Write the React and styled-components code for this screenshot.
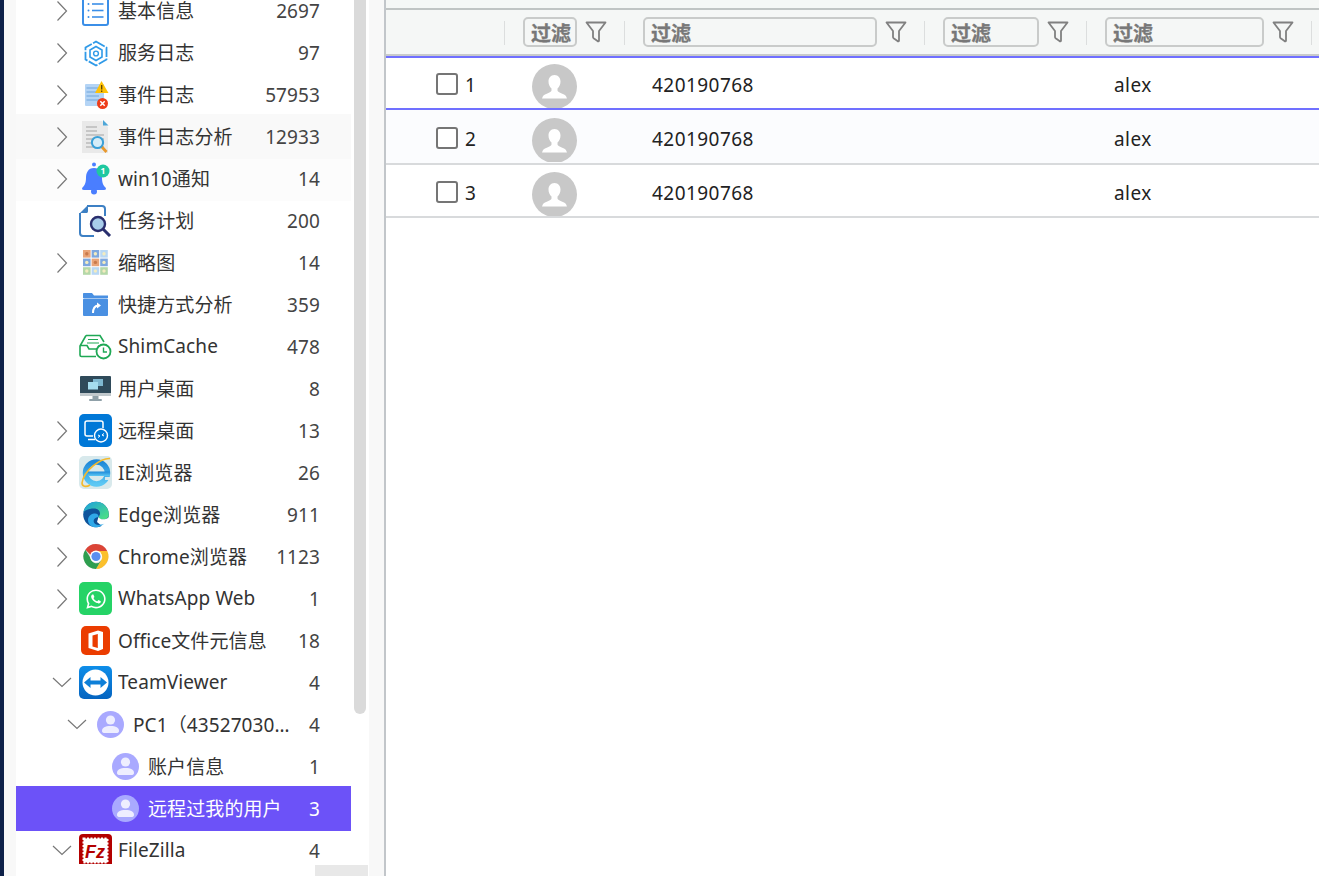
import React from 'react';
import styled, { createGlobalStyle } from 'styled-components';
import { FaWhatsapp } from 'react-icons/fa';

const GlobalStyle = createGlobalStyle`
    html, body {
        margin: 0;
        height: 100%;
        overflow: hidden;
        background: #fff;
        font-family: "Noto Sans", "Noto Sans CJK SC", sans-serif;
    }
    * { box-sizing: border-box; }
`;

const Page = styled.div`
    display: flex;
    height: 876px;
    overflow: hidden;
`;

const NavEdge = styled.div`
    flex: 0 0 4px;
    background: #0e2149;
`;

const Gutter = styled.div`
    flex: 0 0 ${p => p.$width}px;
    background: #f8f8f8;
`;

const TreePane = styled.aside`
    flex: 0 0 353px;
    display: flex;
    flex-direction: column;
    background: #fff;
`;

const TreeBody = styled.div`
    flex: 0 0 864px;
    display: flex;
    overflow: hidden;
`;

const TreeList = styled.div`
    flex: 0 0 338px;
    display: flex;
    flex-direction: column;
    margin-top: -12px;
`;

const TreeRow = styled.div`
    flex: 0 0 45px;
    width: 335px;
    margin-bottom: -3px;
    display: flex;
    align-items: center;
    padding: 0 31px 0 ${p => 31 + p.$level * 15}px;
    color: ${p => (p.$tone === 'selected' ? '#fff' : '#333')};
    background: ${p => ({ selected: '#6c52f8', hover: '#f9f9f9', soft: '#fcfcfc' }[p.$tone] || 'transparent')};
    z-index: ${p => (p.$tone === 'hover' || p.$tone === 'selected' ? 1 : 0)};
    font-size: 19px;
    letter-spacing: 0.1px;
`;

const Arrow = styled.span`
    flex: 0 0 30px;
    margin-right: 2px;
    display: flex;
    justify-content: center;
`;

const IconBox = styled.span`
    flex: 0 0 33px;
    height: 33px;
    svg { display: block; }
`;

const Label = styled.span`
    flex: 1;
    min-width: 0;
    margin-left: 6px;
    padding-bottom: 2px;
    white-space: nowrap;
    overflow: hidden;
    text-overflow: ellipsis;
`;

const Count = styled.span`
    margin-left: 16px;
    flex: none;
    color: ${p => (p.$selected ? '#fff' : '#444')};
`;

const ScrollTrack = styled.div`
    flex: 0 0 15px;
`;

const ScrollThumb = styled.div`
    width: 12px;
    height: 714px;
    background: #dadada;
    border-radius: 0 0 6px 6px;
`;

const HScrollTrack = styled.div`
    flex: 1;
    padding: 1px 0 0 299px;
`;

const HScrollThumb = styled.div`
    width: 53px;
    height: 11px;
    background: #e8e8e8;
`;

const Main = styled.main`
    flex: 1;
    min-width: 0;
    border-left: 2px solid #c2c6ca;
    background: #fff;
`;

const TopStrip = styled.div`
    height: 8px;
    background: #f5f7f6;
`;

const columns = '119px 120px 300px 162px 225px 1fr';

const HeaderRow = styled.div`
    display: grid;
    grid-template-columns: ${columns};
    height: 48px;
    border-top: 2px solid #c0c4c4;
    border-bottom: 2px solid #c8cacb;
    background: #f5f7f6;
`;

const HeaderCell = styled.div`
    display: flex;
    align-items: center;
    padding-left: 18px;
`;

const FilterInput = styled.input`
    width: ${p => p.$width}px;
    height: 30px;
    padding: 2px 0 0 6px;
    border: 2px solid #c9cbca;
    border-radius: 5px;
    background: #f5f7f6;
    outline: none;
    font-family: inherit;
    font-size: 20px;
    font-weight: 700;
    &::placeholder {
        color: #787878;
        opacity: 1;
        -webkit-text-stroke: 0.3px #787878;
    }
`;

const FilterButton = styled.span`
    flex: 0 0 22px;
    margin-left: 8px;
    svg { display: block; }
`;

const Separator = styled.span`
    width: 1px;
    height: 24px;
    margin: 2px 0 0 auto;
    background: #dcdede;
`;

const shadows = {
    active: 'inset 0 2px 0 #7070ff, inset 0 -2px 0 #7070ff',
    stripe: 'inset 0 -1px 0 #d8dadc, 0 1px 0 #d8dadc',
    plain: 'inset 0 -2px 0 #d8dadc',
};

const DataRow = styled.div`
    display: grid;
    grid-template-columns: ${columns};
    height: 54px;
    padding-top: 2px;
    background: ${p => (p.$kind === 'stripe' ? '#fbfcfe' : 'transparent')};
    box-shadow: ${p => shadows[p.$kind]};
    color: #222;
    font-size: 19px;
    letter-spacing: 0.45px;
`;

const CheckCell = styled.div`
    display: flex;
    align-items: center;
    gap: 7px;
    padding-left: 50px;
`;

const RowNumber = styled.span`
    padding-top: 2px;
`;

const Checkbox = styled.span`
    width: 22px;
    height: 22px;
    border: 2px solid #757575;
    border-radius: 3px;
    background: #fff;
`;

const AvatarCell = styled.div`
    padding: 6px 0 0 27px;
`;

const Avatar = styled.div`
    width: 45px;
    height: 44px;
    overflow: hidden;
    svg { display: block; }
`;

const TextCell = styled.div`
    display: flex;
    align-items: center;
    padding: 2px 0 0 27px;
`;

const Svg = ({ children }) => (
    <svg width="33" height="33" viewBox="0 0 33 33" fill="none">{children}</svg>
);

const ChevronRight = () => (
    <svg width="12" height="22" viewBox="0 0 12 22" fill="none">
        <path d="M1.5 1.5L10.5 11L1.5 20.5" stroke="#777" strokeWidth="1.2" />
    </svg>
);

const ChevronDown = () => (
    <svg width="20" height="11" viewBox="0 0 20 11" fill="none">
        <path d="M1 1L10 9.5L19 1" stroke="#777" strokeWidth="1.2" />
    </svg>
);

const FilterIcon = () => (
    <svg width="22" height="22" viewBox="0 0 22 22" fill="none">
        <path d="M1.5 1.5H20.5L14 10V19.5C14 20.5 13 20.5 12.5 20L9 17.5C8.5 17 8 17 8 16V10Z" stroke="#808080" strokeWidth="1.8" strokeLinejoin="round" />
    </svg>
);

const PersonAvatar = () => (
    <svg width="45" height="45" viewBox="0 0 45 45">
        <circle cx="22.5" cy="22.5" r="22.5" fill="#c8c8c8" />
        <path d="M22.5 11C18.6 11 16.5 14 16.5 17.5C16.5 20.5 17.8 23 19.5 24.5V26.5C19.5 28 16 29 13 30.5C11 31.5 10.5 33 10 34.5H35C34.5 33 34 31.5 32 30.5C29 29 25.5 28 25.5 26.5V24.5C27.2 23 28.5 20.5 28.5 17.5C28.5 14 26.4 11 22.5 11Z" fill="#fff" />
    </svg>
);

const BasicInfoIcon = () => (
    <Svg>
        <rect x="4" y="1" width="25" height="30" rx="2" stroke="#3b8fe8" strokeWidth="2" />
        {[10, 16.5, 23].map(y => (
            <g key={y}>
                <circle cx="9.5" cy={y} r="1" fill="#3b8fe8" />
                <path d={`M13 ${y}H24.5`} stroke="#3b8fe8" strokeWidth="1.6" />
            </g>
        ))}
    </Svg>
);

const ServiceIcon = () => (
    <Svg>
        <path d="M17 5.5L27.5 11.5V23.5L17 29.5L6.5 23.5V11.5Z" stroke="#2f9ae8" strokeWidth="1.8" strokeDasharray="10 1.5" />
        <path d="M17 10.5L23 14V21L17 24.5L11 21V14Z" stroke="#2f9ae8" strokeWidth="1.6" />
        <circle cx="17" cy="17.5" r="2.4" stroke="#2f9ae8" strokeWidth="1.4" />
    </Svg>
);

const EventLogIcon = () => (
    <Svg>
        <rect x="6" y="6" width="19" height="22" rx="1" fill="#b4d4f5" />
        {[10, 14, 18, 22].map(y => (
            <path key={y} d={`M7.5 ${y}H20`} stroke="#6fa5dc" strokeWidth="1" />
        ))}
        <path d="M22.5 3L29.5 15H16Z" fill="#ffc107" />
        <path d="M22.7 7V11.5M22.7 12.6V14" stroke="#5b4300" strokeWidth="1.3" />
        <circle cx="23.5" cy="25.5" r="5.5" fill="#ee3d1a" />
        <path d="M21.3 23.3L25.7 27.7M25.7 23.3L21.3 27.7" stroke="#fff" strokeWidth="1.5" />
    </Svg>
);

const AnalysisIcon = () => (
    <Svg>
        <path d="M3 1H23L29 7V33H3Z" fill="#e9e9e9" />
        <path d="M24 0L29.5 5.5H24Z" fill="#4ca6d8" />
        {[7, 11, 15, 19, 23, 27].map((y, i) => (
            <path key={y} d={`M7 ${y}H${i < 2 ? 18 : 25}`} stroke="#a9a9a9" strokeWidth="1.1" />
        ))}
        <path d="M22.5 26.5L27.5 32" stroke="#e8982c" strokeWidth="2.8" />
        <circle cx="18.5" cy="22.5" r="5.6" fill="#d6edf8" stroke="#3aa0d8" strokeWidth="2" />
    </Svg>
);

const BellIcon = () => (
    <Svg>
        <circle cx="15" cy="2.5" r="2" fill="#4a7eff" />
        <path d="M15 6C9 6 7 11 7 16C7 21 5.5 23.5 3.5 25.5C2.5 26.8 3 28 5 28H25C27 28 27.5 26.8 26.5 25.5C24.5 23.5 23 21 23 16C23 11 21 6 15 6Z" fill="#4a7eff" />
        <circle cx="15" cy="29.5" r="3" fill="#4a7eff" />
        <circle cx="24" cy="9" r="6.5" fill="#1fc8a0" />
        <text x="24" y="12" textAnchor="middle" fontSize="8.5" fontWeight="700" fill="#fff" fontFamily="Noto Sans">1</text>
    </Svg>
);

const TaskIcon = () => (
    <Svg>
        <path d="M8 2H23C25 2 26 3 26 5V12M15 32H4C2 32 1 31 1 29V9" stroke="#3d80c4" strokeWidth="2" />
        <path d="M9 1L1 9H7C8.5 9 9 8.5 9 7Z" fill="#3d80c4" />
        <path d="M24 25L31 32" stroke="#2a2f6e" strokeWidth="3" />
        <circle cx="19" cy="20" r="7" fill="#a8cdea" stroke="#2a2f6e" strokeWidth="2.4" />
    </Svg>
);

const thumbColors = [
    '#e8a57a', '#7fa8de', '#b8d8f4',
    '#7fa8de', '#e8a57a', '#7fa8de',
    '#b5d8a8', '#b8d8f4', '#b5d8a8',
];

const ThumbIcon = () => (
    <Svg>
        {thumbColors.map((c, i) => (
            <g key={i}>
                <rect x={4 + (i % 3) * 8.6} y={4 + Math.floor(i / 3) * 8.6} width="7.6" height="7.6" fill={c} />
                <circle cx={7.8 + (i % 3) * 8.6} cy={7.8 + Math.floor(i / 3) * 8.6} r="1.7" fill={i === 0 || i === 4 ? '#c97a4c' : '#f3ecc0'} />
            </g>
        ))}
    </Svg>
);

const ShortcutIcon = () => (
    <Svg>
        <path d="M4 6C4 5.4 4.4 5 5 5H13L15 7.5H29V10H4Z" fill="#4a90e2" />
        <rect x="4" y="10.5" width="25" height="17.5" rx="1" fill="#4a90e2" />
        <path d="M14 25C14 20 15.5 18 19 17.5" stroke="#fff" strokeWidth="2" />
        <path d="M18 14.5L22 17.5L18 20.5Z" fill="#fff" />
    </Svg>
);

const ShimIcon = () => (
    <Svg>
        <path d="M7 5.5H21L25 12M7 5.5L1 16V25C1 26 1.5 26.5 2.5 26.5H17" stroke="#1fa855" strokeWidth="1.6" />
        <path d="M1 15.5H8L10 19H18L20 15.5" stroke="#1fa855" strokeWidth="1.6" />
        <path d="M9 9.5H19M8 13H20" stroke="#1fa855" strokeWidth="1.2" />
        <circle cx="24.5" cy="21.5" r="7" fill="#fff" stroke="#1fa855" strokeWidth="1.8" />
        <path d="M24.5 17.5V22H28" stroke="#1fa855" strokeWidth="1.4" />
    </Svg>
);

const DesktopIcon = () => (
    <Svg>
        <rect x="1" y="4" width="31" height="20" rx="1" fill="#2f4a5a" />
        <rect x="1" y="21" width="31" height="3" fill="#c0c8cc" />
        <rect x="13.5" y="24" width="6" height="3" fill="#8fa0a8" />
        <rect x="10" y="27" width="13" height="2" rx="1" fill="#8fa0a8" />
        <rect x="14" y="7" width="10" height="7" fill="#7fb8d0" />
        <rect x="9" y="10" width="10" height="7.5" fill="#a5dcee" />
    </Svg>
);

const RdpIcon = () => (
    <Svg>
        <rect width="33" height="33" rx="5" fill="#0078d7" />
        <path d="M14 22H8C7 22 6 21 6 20V9C6 8 7 7 8 7H22C23 7 24 8 24 9V14M9 25.5H16" stroke="#fff" strokeWidth="1.5" />
        <circle cx="22" cy="21.5" r="6.5" fill="#0078d7" stroke="#fff" strokeWidth="1.4" />
        <path d="M19 23.5L21 22L19 21M25 19.5L23 21L25 22" stroke="#fff" strokeWidth="1" />
    </Svg>
);

const IeIcon = () => (
    <Svg>
        <defs>
            <linearGradient id="ieBlue" x1="0" y1="0" x2="0" y2="1">
                <stop offset="0" stopColor="#1e88d8" />
                <stop offset="1" stopColor="#5cc8f4" />
            </linearGradient>
        </defs>
        <rect width="33" height="33" rx="5" fill="#d8e9ec" />
        <circle cx="17.5" cy="17" r="11" stroke="url(#ieBlue)" strokeWidth="5.5" />
        <path d="M9 15.5H31V20H9Z" fill="url(#ieBlue)" />
        <path d="M26 21H32V24H26Z" fill="#d8e9ec" />
        <path d="M31 2.5C22 2 5 14 3 27C3 30.5 7 31.5 11 29" stroke="#f4b92c" strokeWidth="1.6" />
    </Svg>
);

const EdgeIcon = () => (
    <Svg>
        <defs>
            <linearGradient id="edgeBlue" x1="0" y1="0" x2="1" y2="1">
                <stop offset="0" stopColor="#0c59a4" />
                <stop offset="1" stopColor="#114a8b" />
            </linearGradient>
            <linearGradient id="edgeGreen" x1="0" y1="0" x2="1" y2="1">
                <stop offset="0" stopColor="#1b9de2" />
                <stop offset="1" stopColor="#50e67c" />
            </linearGradient>
        </defs>
        <circle cx="17" cy="16.5" r="12.8" fill="url(#edgeBlue)" />
        <path d="M4.5 14C6 7.5 11 3.7 17 3.7C24 3.7 29.8 9 29.8 16.5C29.8 20 27 21.5 24 21.5C21 21.5 19.5 20.5 19.5 19C19.5 18 21 17.5 21 15.5C21 12.5 18.5 10.5 15 10.5C10 10.5 7 12 4.5 14Z" fill="url(#edgeGreen)" />
        <path d="M19.5 19C21 21.8 25.5 22.3 30 19.5C29.5 24 27 27 24 29L18 24Z" fill="#fff" />
        <path d="M19.5 19C15.5 19.5 14 22 15 24.5C16 27 20 28 25.5 25.5C22 28.5 19 29.3 17 29.3C12 29.3 9 26 9 22C9 19 11.5 16 15 15.5C18 15 20 17 19.5 19Z" fill="#2fa8e8" />
    </Svg>
);

const ChromeIcon = () => (
    <Svg>
        <circle cx="17" cy="16.5" r="12.5" fill="#e0e0e0" />
        <path d="M17 4A12.5 12.5 0 0 1 28.2 11H17A5.5 5.5 0 0 0 11.8 14.9L6.4 9.7A12.5 12.5 0 0 1 17 4Z" fill="#db4437" />
        <path d="M28.2 11A12.5 12.5 0 0 1 17 29L22 20.5A5.5 5.5 0 0 0 22.5 14.5L17 11Z" fill="#fbc02d" />
        <path d="M6.4 9.7L11.8 18.6A5.5 5.5 0 0 0 22 20.5L17 29A12.5 12.5 0 0 1 6.4 9.7Z" fill="#2e9e4f" />
        <circle cx="17" cy="16.5" r="6" fill="#fff" />
        <circle cx="17" cy="16.5" r="4.6" fill="#5a8ff0" />
    </Svg>
);

const WhatsTile = styled.span`
    display: flex;
    align-items: center;
    justify-content: center;
    width: 33px;
    height: 33px;
    border-radius: 5px;
    background: #25d366;
    color: #fff;
    font-size: 22px;
    svg { display: block; }
`;

const WhatsAppIcon = () => (
    <WhatsTile><FaWhatsapp /></WhatsTile>
);

const OfficeIcon = () => (
    <Svg>
        <rect x="2" y="2" width="29" height="29" rx="5" fill="#eb3c00" />
        <path d="M9.5 9.5L19 6.5L24 8V25L19 27L9.5 24Z" fill="#fff" />
        <path d="M13.5 11.5L18.8 10V24L13.5 22.5Z" fill="#eb3c00" />
    </Svg>
);

const TeamViewerIcon = () => (
    <Svg>
        <defs>
            <linearGradient id="tvBlue" x1="0" y1="0" x2="0" y2="1">
                <stop offset="0" stopColor="#0e8ee9" />
                <stop offset="1" stopColor="#0564c0" />
            </linearGradient>
        </defs>
        <rect width="33" height="33" rx="5" fill="url(#tvBlue)" />
        <circle cx="16.5" cy="16.5" r="13" fill="#fff" />
        <path d="M5 16.5L11.5 11V14.5H21.5V11L28 16.5L21.5 22V18.5H11.5V22Z" fill="#0e7fd8" />
    </Svg>
);

const UserIcon = () => (
    <Svg>
        <circle cx="16.5" cy="16.5" r="13.5" fill="#a9a9ff" />
        <circle cx="16.5" cy="12" r="4.6" fill="#eeeeff" />
        <path d="M8 23C8 19.5 11 18 16.5 18C22 18 25 19.5 25 23C25 24.5 24 25 22 25H11C9 25 8 24.5 8 23Z" fill="#eeeeff" />
    </Svg>
);

const FileZillaIcon = () => (
    <Svg>
        <rect width="33" height="33" rx="4" fill="#b30000" />
        <rect x="4.5" y="4.5" width="24" height="24" fill="#fff" stroke="#fff" strokeWidth="2" strokeDasharray="2 1.5" />
        <text x="16" y="23.5" textAnchor="middle" fontSize="18" fontWeight="700" fontStyle="italic" fill="#b30000" fontFamily="Liberation Sans">Fz</text>
    </Svg>
);

const treeItems = [
    { label: '基本信息', count: 2697, icon: BasicInfoIcon, arrow: 'right' },
    { label: '服务日志', count: 97, icon: ServiceIcon, arrow: 'right' },
    { label: '事件日志', count: 57953, icon: EventLogIcon, arrow: 'right' },
    { label: '事件日志分析', count: 12933, icon: AnalysisIcon, arrow: 'right', tone: 'hover' },
    { label: 'win10通知', count: 14, icon: BellIcon, arrow: 'right', tone: 'soft' },
    { label: '任务计划', count: 200, icon: TaskIcon },
    { label: '缩略图', count: 14, icon: ThumbIcon, arrow: 'right' },
    { label: '快捷方式分析', count: 359, icon: ShortcutIcon },
    { label: 'ShimCache', count: 478, icon: ShimIcon },
    { label: '用户桌面', count: 8, icon: DesktopIcon },
    { label: '远程桌面', count: 13, icon: RdpIcon, arrow: 'right' },
    { label: 'IE浏览器', count: 26, icon: IeIcon, arrow: 'right' },
    { label: 'Edge浏览器', count: 911, icon: EdgeIcon, arrow: 'right' },
    { label: 'Chrome浏览器', count: 1123, icon: ChromeIcon, arrow: 'right' },
    { label: 'WhatsApp Web', count: 1, icon: WhatsAppIcon, arrow: 'right' },
    { label: 'Office文件元信息', count: 18, icon: OfficeIcon },
    { label: 'TeamViewer', count: 4, icon: TeamViewerIcon, arrow: 'down' },
    { label: 'PC1（435270301）', count: 4, icon: UserIcon, arrow: 'down', level: 1 },
    { label: '账户信息', count: 1, icon: UserIcon, level: 2 },
    { label: '远程过我的用户', count: 3, icon: UserIcon, level: 2, tone: 'selected' },
    { label: 'FileZilla', count: 4, icon: FileZillaIcon, arrow: 'down' },
];

const filterWidths = [54, 234, 96, 159];

const tableRows = [
    { id: 1, kind: 'active' },
    { id: 2, kind: 'stripe' },
    { id: 3, kind: 'plain' },
];

export default function App() {
    return (
        <Page>
            <GlobalStyle />
            <NavEdge />
            <Gutter $width={12} />
            <TreePane>
                <TreeBody>
                    <TreeList>
                        {treeItems.map(item => (
                            <TreeRow key={item.label} $level={item.level || 0} $tone={item.tone}>
                                <Arrow>
                                    {item.arrow === 'right' && <ChevronRight />}
                                    {item.arrow === 'down' && <ChevronDown />}
                                </Arrow>
                                <IconBox><item.icon /></IconBox>
                                <Label>{item.label}</Label>
                                <Count $selected={item.tone === 'selected'}>{item.count}</Count>
                            </TreeRow>
                        ))}
                    </TreeList>
                    <ScrollTrack><ScrollThumb /></ScrollTrack>
                </TreeBody>
                <HScrollTrack><HScrollThumb /></HScrollTrack>
            </TreePane>
            <Gutter $width={15} />
            <Main>
                <TopStrip />
                <HeaderRow>
                    <HeaderCell><Separator /></HeaderCell>
                    {filterWidths.map(w => (
                        <HeaderCell key={w}>
                            <FilterInput $width={w} placeholder="过滤" />
                            <FilterButton><FilterIcon /></FilterButton>
                            <Separator />
                        </HeaderCell>
                    ))}
                </HeaderRow>
                {tableRows.map(row => (
                    <DataRow key={row.id} $kind={row.kind}>
                        <CheckCell><Checkbox /><RowNumber>{row.id}</RowNumber></CheckCell>
                        <AvatarCell><Avatar><PersonAvatar /></Avatar></AvatarCell>
                        <TextCell>420190768</TextCell>
                        <TextCell />
                        <TextCell>alex</TextCell>
                    </DataRow>
                ))}
            </Main>
        </Page>
    );
}
